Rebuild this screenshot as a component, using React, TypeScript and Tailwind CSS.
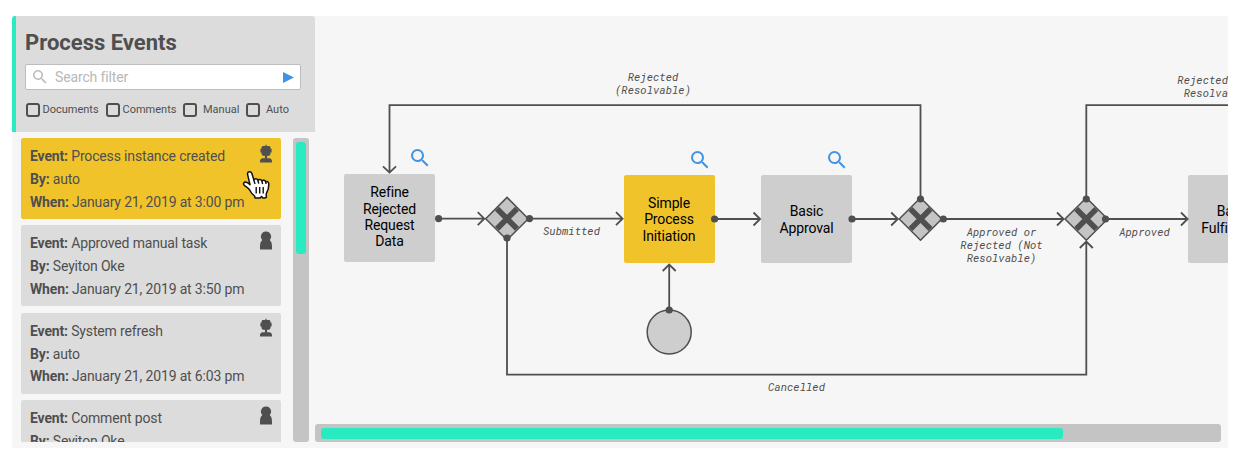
import type { ReactNode } from 'react';

type EventItem = { title: string; by: string; when: string; kind: 'auto' | 'manual'; active?: boolean };

const events: EventItem[] = [
  { title: 'Process instance created', by: 'auto', when: 'January 21, 2019 at 3:00 pm', kind: 'auto', active: true },
  { title: 'Approved manual task', by: 'Seyiton Oke', when: 'January 21, 2019 at 3:50 pm', kind: 'manual' },
  { title: 'System refresh', by: 'auto', when: 'January 21, 2019 at 6:03 pm', kind: 'auto' },
  { title: 'Comment post', by: 'Seyiton Oke', when: 'January 21, 2019 at 6:20 pm', kind: 'manual' },
];

function Magnifier({ className }: { className: string }) {
  return (
    <svg viewBox="3 3 17.49 17.49" className={className} fill="currentColor" aria-hidden="true">
      <path d="M15.5 14h-.79l-.28-.27A6.47 6.47 0 0 0 16 9.5 6.5 6.5 0 1 0 9.5 16c1.61 0 3.09-.59 4.23-1.57l.27.28v.79l5 4.99L20.49 19l-4.99-5zm-6 0C7.01 14 5 11.99 5 9.5S7.01 5 9.5 5 14 7.01 14 9.5 11.99 14 9.5 14z" />
    </svg>
  );
}

function PersonIcon({ kind }: { kind: 'auto' | 'manual' }) {
  return (
    <svg viewBox="0 0 14 20" className="absolute right-[8px] top-[5.500px] h-5 w-3.5" fill="#4f4f4f" aria-hidden="true">
      {kind === 'auto' ? (
        <path d="M6.400.8h1.200v1.300h2.900l1 1.100v1.600h1.100v3.800h-1.100v1.600l-1.200 1.500H8.100v2.500h2.300c1.600.3 2.600 1.400 2.600 3v1.200H1v-1.200c0-1.600 1-2.700 2.600-3h2.300v-2.500H3.700L2.500 10.200V8.600H1.400V4.800h1.100V3.200l1-1.100h2.900z" />
      ) : (
        <path d="M7 .6a4.900 4.900 0 0 1 3.700 8.300c1.600 1.300 2.300 3.400 2.300 6.800v2.700H1v-2.700c0-3.400.7-5.500 2.300-6.800A4.900 4.900 0 0 1 7 .6z" />
      )}
    </svg>
  );
}

function Row({ label, value }: { label: string; value: string }) {
  return (
    <p className="whitespace-nowrap leading-[22.8px]">
      <span className="font-bold">{label}:</span> {value}
    </p>
  );
}

function EventCard({ item }: { item: EventItem }) {
  return (
    <li
      className={`relative h-[81px] shrink-0 rounded-[2px] px-[9px] pt-[7px] text-[14px] tracking-[-0.155px] ${
        item.active ? 'bg-[#f1c32b]' : 'bg-[#dcdcdc]'
      }`}
    >
      <Row label="Event" value={item.title} />
      <Row label="By" value={item.by} />
      <Row label="When" value={item.when} />
      <PersonIcon kind={item.kind} />
    </li>
  );
}

function Filter({ label, className }: { label: string; className: string }) {
  return (
    <label className={`flex items-center ${className}`}>
      <span className="h-3.5 w-3.5 shrink-0 rounded-[3px] border-2 border-[#4f4f4f]" />
      <span>{label}</span>
    </label>
  );
}

function HandCursor() {
  return (
    <svg viewBox="0 0 29 31" className="absolute left-[230.500px] top-[154px] h-[31px] w-[29px]" aria-hidden="true">
      <path
        d="M5.500 4.200C5.200 1 9 .8 9.900 3.600l2 6.300c.8-1.700 3.500-1.300 4 .5.900-1.600 3.600-1 4 .7 1-1.500 3.500-.8 3.900.9 1.200-1 3 .1 3 1.900.1 3.800-.8 6.400-2.200 8.900-.6 1.200-.5 2.500-.2 4.500-1.400.7-2.200.9-3.500.8l-1.400-1.600-1.300 1.400H13l-.4-1.900c-2.200-1.600-3.500-3.200-4.500-5.300-1.300-2.100-2.900-3.500-5.400-5.100-2.200-1.400-.8-3.900 1.500-3.400 1.500.4 2.600 1.100 3.800 2.500z"
        fill="#fff"
        stroke="#111"
        strokeWidth="1.500"
        strokeLinejoin="round"
      />
      <path d="M14.200 17v6.500M17.700 17v6.500M21.200 17v6.500M11.800 10l1.200 4M15.900 10.500l.8 3.200M19.900 11.200l.7 2.800M23.800 12l.2 2" stroke="#111" strokeWidth="1.400" fill="none" />
    </svg>
  );
}

function Task({ children, className }: { children: ReactNode; className: string }) {
  return (
    <div
      className={`absolute flex w-[91px] items-center justify-center rounded-[2px] text-center text-[14px] tracking-[-0.140px] leading-[16.400px] text-black ${className}`}
    >
      <span>{children}</span>
    </div>
  );
}

function EdgeLabel({ children, className }: { children: ReactNode; className: string }) {
  return (
    <p
      className={`absolute w-32 whitespace-nowrap text-center font-['Roboto_Mono','Liberation_Mono',monospace] text-[10.800px] italic leading-[12.900px] text-[#4f4f4f] ${className}`}
    >
      {children}
    </p>
  );
}

function Gateway({ x, y }: { x: number; y: number }) {
  return (
    <g transform={`translate(${x} ${y})`}>
      <path d="M0-21.300 21.300 0 0 21.300-21.300 0z" fill="#c4c4c4" strokeWidth="1.500" />
      <path d="M-10-10 10 10M10-10-10 10" strokeWidth="5.600" />
    </g>
  );
}

const dots = [
  [438.600, 218.600],
  [529.500, 218.600],
  [507, 238],
  [714.600, 219],
  [669.200, 310],
  [852, 219],
  [920.500, 199],
  [943.300, 219],
  [1086.300, 199],
  [1105.500, 219],
];

function Edges() {
  return (
    <svg
      viewBox="315 16 913 408"
      className="absolute left-0 top-0 h-[408px] w-[913px]"
      fill="none"
      stroke="#4f4f4f"
      strokeWidth="1.800"
      aria-hidden="true"
    >
      <circle cx="669.200" cy="332" r="22" fill="#cecece" strokeWidth="1.500" />
      <Gateway x={507} y={218.700} />
      <Gateway x={920.500} y={219} />
      <Gateway x={1086.300} y={219} />
      <path d="M920.500 199V105.200H389.500V172.500M383 166.400l6.500 6.200 6.500-6.200" />
      <path d="M438.600 218.700H484.500M477.700 212.200l6.600 6.500-6.600 6.500" />
      <path d="M529.500 218.700H622.500M616 212.200l6.600 6.500-6.600 6.500" />
      <path d="M714.600 219H760.500M753.500 212.500l6.600 6.500-6.600 6.500" />
      <path d="M852 219H898M891.200 212.500l6.600 6.500-6.600 6.500" />
      <path d="M943.300 219H1063.500M1057 212.500l6.600 6.500-6.600 6.500" />
      <path d="M1105.500 219H1188M1181 212.500l6.600 6.500-6.600 6.500" />
      <path d="M669.200 310V264.500M662.700 271l6.500-6.500 6.500 6.500" />
      <path d="M507 238V374.700H1086.300V241.500M1079.800 248l6.500-6.500 6.500 6.500" />
      <path d="M1086.300 199V105.200H1230" />
      {dots.map(([cx, cy]) => (
        <circle key={`${cx}-${cy}`} cx={cx} cy={cy} r="3.600" fill="#4f4f4f" stroke="none" />
      ))}
    </svg>
  );
}

export default function App() {
  return (
    <div className="h-[456px] w-[1248px] overflow-hidden bg-white pl-[11.500px] pt-4 font-['Roboto','Liberation_Sans',sans-serif] text-[#4f4f4f]">
      <main className="flex h-[432px] w-[1216px] overflow-hidden bg-[#f6f6f6]">
        <aside className="relative flex w-[303.500px] shrink-0 flex-col">
          <header className="h-[115.500px] shrink-0 rounded-t-[3px] border-l-[4.500px] border-[#29ebc1] bg-[#dcdcdc] pl-[9.500px] pr-[14px] pt-[13.500px]">
            <h1 className="text-[22px] font-bold leading-[26px]">Process Events</h1>
            <div className="mt-[8.500px] flex h-[26px] items-center rounded-[2px] border border-[#bdbdbd] bg-white pl-[7px] pr-1.5">
              <Magnifier className="h-[13.500px] w-[13.500px] text-[#bdbdbd]" />
              <span className="ml-[8.500px] flex-1 text-[14px] tracking-[-0.140px] text-[#b8b8b8]">Search filter</span>
              <svg viewBox="0 0 11 11" className="h-[11px] w-[11px]" fill="#4094e3" aria-hidden="true">
                <path d="M0 0 11 5.500 0 11z" />
              </svg>
            </div>
            <div className="mt-3 flex h-4 items-center whitespace-nowrap pl-[0.500px] text-[11px]">
              <Filter label="Documents" className="w-[80px] gap-[3px]" />
              <Filter label="Comments" className="w-[77.500px] gap-[3px]" />
              <Filter label="Manual" className="w-[63px] gap-1.5" />
              <Filter label="Auto" className="gap-1.5" />
            </div>
          </header>
          <div className="mt-[6.500px] flex h-[304px] justify-between pl-[9.500px] pr-[6.500px]">
            <ul className="flex w-[260px] flex-col gap-[6.400px] overflow-hidden">
              {events.map((item) => (
                <EventCard key={item.title} item={item} />
              ))}
            </ul>
            <div className="w-4 rounded-[3px] bg-[#c4c4c4] px-[3px] pt-1">
              <div className="h-28 rounded-[3px] bg-[#29ebc1]" />
            </div>
          </div>
          <HandCursor />
        </aside>

        <section className="flex min-w-0 flex-1 flex-col">
          <div className="relative h-[408px] overflow-hidden">
            <Task className="left-[29px] top-[157.500px] h-[88px] bg-[#cecece] pb-[1px]">
              Refine<br />Rejected<br />Request<br />Data
            </Task>
            <Task className="left-[308.500px] top-[159.400px] h-[88px] bg-[#f1c32b]">
              Simple<br />Process<br />Initiation
            </Task>
            <Task className="left-[446px] top-[159.400px] h-[88px] bg-[#cecece] pt-[1px]">
              Basic<br />Approval
            </Task>
            <Task className="left-[873px] top-[159.400px] h-[88px] bg-[#cecece] pt-[1px]">
              Basic<br />Fulfillment
            </Task>
            <Edges />
            <Magnifier className="absolute left-[96px] top-[133px] h-[17.500px] w-[17.500px] text-[#4094e3]" />
            <Magnifier className="absolute left-[375.500px] top-[135px] h-[17.500px] w-[17.500px] text-[#4094e3]" />
            <Magnifier className="absolute left-[513px] top-[135px] h-[17.500px] w-[17.500px] text-[#4094e3]" />
            <EdgeLabel className="left-[274px] top-[55px]">Rejected<br />(Resolvable)</EdgeLabel>
            <EdgeLabel className="left-[192.500px] top-[208.500px]">Submitted</EdgeLabel>
            <EdgeLabel className="left-[417.500px] top-[365px]">Cancelled</EdgeLabel>
            <EdgeLabel className="left-[622.500px] top-[210px]">
              Approved or<br />Rejected (Not<br />Resolvable)
            </EdgeLabel>
            <EdgeLabel className="left-[765.500px] top-[210px]">Approved</EdgeLabel>
            <EdgeLabel className="left-[839.500px] top-[58px]">Rejected (Not<br />Resolvable)</EdgeLabel>
          </div>
          <div className="mr-[6.500px] h-[18px] rounded-[3px] bg-[#c4c4c4] px-1.5 py-[3.500px]">
            <div className="h-[11px] w-[742px] rounded-[3px] bg-[#29ebc1]" />
          </div>
        </section>
      </main>
    </div>
  );
}
